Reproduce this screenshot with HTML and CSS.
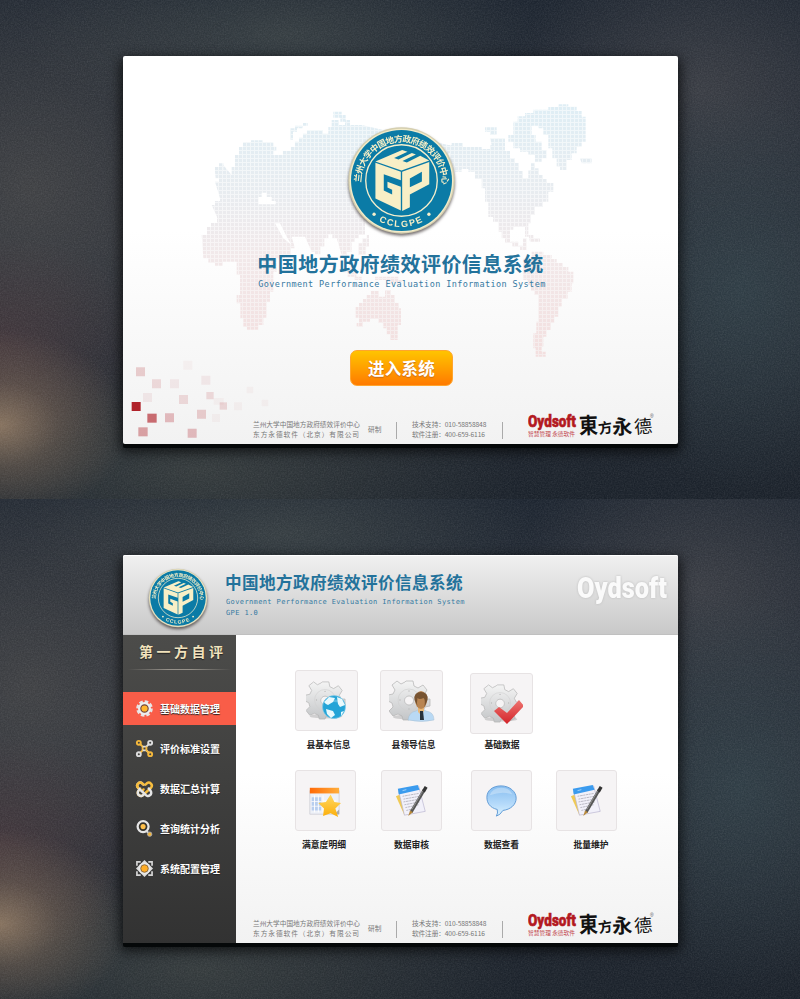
FILE: index.html
```html
<!DOCTYPE html>
<html lang="zh-CN">
<head>
<meta charset="utf-8">
<title>中国地方政府绩效评价信息系统</title>
<link rel="stylesheet" href="styles.css">
</head>
<body>
<svg class="defs" width="0" height="0" aria-hidden="true">
  <defs>
    <filter id="grain" x="0" y="0" width="100%" height="100%"><feTurbulence type="fractalNoise" baseFrequency=".7" numOctaves="2" seed="4"/><feColorMatrix values="0 0 0 0 1  0 0 0 0 1  0 0 0 0 1  .9 .9 0 0 -.65"/></filter>
    <path id="arcTop" d="M-121 6A121 121 0 0 1 121 6"/>
    <path id="arcBottom" d="M-139 0A139 139 0 0 0 139 0"/>
    <linearGradient id="silver" x1="0" y1="0" x2="0" y2="1"><stop offset="0" stop-color="#f4f4f4"/><stop offset="1" stop-color="#c3c5c7"/></linearGradient>
    <linearGradient id="blueBall" x1="0" y1="0" x2="0" y2="1"><stop offset="0" stop-color="#86bdf0"/><stop offset=".6" stop-color="#b5dafa"/><stop offset="1" stop-color="#dcf3ff"/></linearGradient>
    <linearGradient id="redTick" x1="0" y1="0" x2="0" y2="1"><stop offset="0" stop-color="#ee7470"/><stop offset="1" stop-color="#d3242a"/></linearGradient>
    <linearGradient id="starFill" x1="0" y1="0" x2="0" y2="1"><stop offset="0" stop-color="#ffd964"/><stop offset="1" stop-color="#fcae0a"/></linearGradient>
    <linearGradient id="calHead"><stop offset="0" stop-color="#ff6a08"/><stop offset="1" stop-color="#ffae3c"/></linearGradient>
    <symbol id="emblem" viewBox="-163 -163 326 326">
      <circle r="159" fill="#d5cfaf"/><circle r="155" fill="#f3ecca"/><circle r="151" fill="#0b7ba6"/>
      <circle r="107" fill="none" stroke="#f6efcc" stroke-width="4"/>
      <text class="ring-cn" textLength="386"><textPath href="#arcTop">兰州大学中国地方政府绩效评价中心</textPath></text>
      <text class="ring-en" text-anchor="middle"><textPath href="#arcBottom" startOffset="50%">CCLGPE</textPath></text>
      <circle cx="-82" cy="101" r="5" fill="#f6efcc"/><circle cx="82" cy="101" r="5" fill="#f6efcc"/>
      <g fill="#f8efc6">
        <path d="M-78-53L-2-26V-1L-53-19V30L-28 42V28L-42 21V4L-2 19V90L-78 54Z"/>
        <path fill-rule="evenodd" d="M2-26L83-55V11L25 42V80L2 91ZM25-6V20L61 3V-26Z"/>
        <path d="M-78-57L2-91 18-86-22-67-9-63 31-82 43-78 3-58 16-54 56-74 83-60 0-30Z"/>
      </g>
    </symbol>
    <symbol id="gear" viewBox="0 0 42 42">
      <ellipse cx="21" cy="38" rx="17" ry="2.5" fill="#bbb" opacity=".65"/>
      <path fill-rule="evenodd" d="M17 2h7l1 5 4 2 5-3 4 5-3 5 2 4h4v7l-5 1-2 4 2 5-6 3-4-3-5 1-1 3h-6l-1-4-4-2-5 2-4-5 4-4-1-4-4-2v-6l5-1 2-4-3-5 5-4 4 3 4-2zM20 17a4.500 4.500 0 1 0 .1 0z" fill="url(#silver)" stroke="#b2b2b2" stroke-width=".7"/>
      <circle cx="20" cy="21" r="11" fill="none" stroke="#cfcfcf" stroke-width=".6"/>
      <g fill="#bbb"><circle cx="20" cy="12" r=".7"/><circle cx="11" cy="21" r=".7"/><circle cx="29" cy="21" r=".7"/><circle cx="20" cy="30" r=".7"/></g>
    </symbol>
    <symbol id="document" viewBox="0 0 36 36">
      <path d="M1 13L13 8 19 29 10 33Z" fill="#f0ca55"/>
      <path d="M4 8L25 2 32 29 10 33Z" fill="#f2f1fa" stroke="#b8b3cf" stroke-width=".7"/>
      <path d="M3 5L24 1 26 6 4 11Z" fill="#3b9bee"/>
      <path d="M8 7l4-1" stroke="#a5d3fa"/>
      <path d="M8 13l17-3M9 16l17-3M9 19l17-3M10 22l16-3M11 25l14-3M12 28l9-2" stroke="#aaa9b4" stroke-width=".8" stroke-dasharray="2 .6 3 .5"/>
      <path d="M31 6L17 30" stroke="#555" stroke-width="3.2"/><path d="M33 3L30 8" stroke="#333" stroke-width="3.5"/>
      <path d="M29.500 7L18 27" stroke="#aaa" stroke-width=".7"/><path d="M16 28l3 2-5 4z" fill="#b88a3c"/>
    </symbol>
    <symbol id="brand" viewBox="0 0 126 28">
      <text class="oyd" x="0" y="15.500" textLength="48" lengthAdjust="spacingAndGlyphs">Oydsoft</text>
      <text class="slogan" x="0" y="24.500" textLength="47" lengthAdjust="spacingAndGlyphs">智慧管理 永德软件</text>
      <g class="brush">
        <text x="51" y="22.500" font-size="22" textLength="19" lengthAdjust="spacingAndGlyphs" transform="rotate(-2 60 14)">東</text>
        <text x="70" y="22" font-size="14" transform="rotate(-8 77 16)">方</text>
        <text x="84" y="23" font-size="20" transform="rotate(-3 94 15)">永</text>
        <text class="thin" x="106" y="22" font-size="18" transform="rotate(-5 115 15)">德</text>
      </g>
      <text class="reg" x="122" y="7">®</text>
    </symbol>
  </defs>
</svg>

<section class="scene">
  <svg class="grain"><rect width="800" height="500" filter="url(#grain)"/></svg>
  <div class="window splash">
    <svg class="backdrop" viewBox="123 56 555 388" aria-hidden="true">
      <defs>
        <pattern id="cells" width="12" height="12" patternUnits="userSpaceOnUse"><rect width="12" height="12" fill="#777"/><rect width="9" height="9" fill="#fff"/></pattern>
        <mask id="grid" maskUnits="userSpaceOnUse" x="0" y="0" width="1210" height="810"><rect width="1210" height="810" fill="url(#cells)"/></mask>
        <linearGradient id="mapTint" gradientUnits="userSpaceOnUse" x1="0" y1="30" x2="0" y2="780"><stop offset="0" stop-color="#dfeef5"/><stop offset=".35" stop-color="#e8ecf0"/><stop offset=".6" stop-color="#f2e9ea"/><stop offset="1" stop-color="#f3dfdf"/></linearGradient>
      </defs>
      <g transform="translate(195 95) scale(.33333)" fill="url(#mapTint)" mask="url(#grid)">
        <path fill-rule="evenodd" d="M20 420H36V396H48V384H66V365L50 330H60V318H75V310L60 260H72V228H85V210L110 240V216H120V180H132V156H144V142H168V136H204V142H235V155H244V168H235V180H264V168H288V156H300V140H312V128H324V116H336V106H384V116H400V96H410V75H432V90H500L760 150V230L540 300 510 380V420H492V430H480V440H470V470H456V480H440L425 430H412V418H400V430H388V455H376V478H360V470H350L330 425H290L300 460H288V480H270V490H245V530H235V590H225V620H215V668H205V690H190V704H156V696H145V670H136V625H125V600H135V540H125V500H84V512H60V504H40V490H25ZM190 320V306H200V293H215V306H230V318H242V328H190ZM240 385L265 430 290 450 275 425 255 385Z"/>
        <path d="M285 134V100H300V92H324V84H338V92H324V100H306V110H294V134ZM415 50H440V60H452V75H465V90H450V80H436V68H415ZM60 230V216H72V205H85V240H72V250H62ZM490 480V445H502V430H515V420H522V455H512V480ZM440 520H470V532H484V545H500V555H478V545H458V532H440ZM540 545H610V555H620V565H580V555H540Z"/>
        <path d="M482 650V636H492V624H504V612H515V600H528V588H552V605H570V585H588V600H600V624H612V640H618V690H608V735H585V718H575V700H565V684H550V672H525V680H504V695H485V684H492V668H482Z"/>
        <path d="M755 150H770V144H804V156H860V162H885V150H930V168H945V190H960V204H972V228H984V250H1000V225H1008V205H1020V220H1032V240H1044V252H1056V264H1075V290H1060V320H1044V336H1020V360H1008V385H1000V425H990V396H955V404H945V440H970V452H984V430H995V465H975V455H952V444H930V430H920V410H910V380H894V366H880V320H870V280H860V252H840V230H820V222H800V230H780V240H768V220H756V190H765V175H755Z"/>
        <path d="M955 80H968V64H990V54H1015V44H1060V36H1090V28H1120V35H1145V48H1160V65H1172V140H1160V155H1145V175H1130V195H1115V225H1095V215H1085V190H1072V160H1060V120H1045V100H1030V92H1010V120H1022V140H1040V165H1055V190H1040V200H1020V180H1000V170H975V160H955V140H940V120H955ZM870 97H905V120H885V110H870ZM885 130H930V150H890ZM1155 190H1190V205H1160ZM1000 420H1015V430H1035V440H1005Z"/>
        <path d="M1010 470H1045V480H1070V492H1085V504H1104V516H1120V530H1135V565H1130V590H1118V612H1100V635H1090V665H1078V684H1068V705H1055V725H1045V755H1040V770H1052V785H1022V760H1015V715H1024V680H1030V600H1018V588H1008V570H998V555H985V490H1010Z"/>
      </g>
      <g transform="translate(120 340) scale(.33333)" fill="#b0222a">
        <path opacity=".2" d="M48 82h27v27h-27zM231 209h27v27h-27z"/><path opacity=".14" d="M96 118h27v27h-27zM177 165h27v27h-27zM259 156h22v22h-22z"/>
        <path opacity=".07" d="M150 118h27v27h-27zM69 159h27v27h-27zM244 107h27v27h-27z"/><path opacity=".035" d="M190 62h27v27h-27zM276 222h24v24h-24zM342 187h24v24h-24zM281 174h30v20h-30zM380 140h20v20h-20zM425 179h20v20h-20z"/>
        <path opacity=".15" d="M299 187h22v22h-22z"/><path opacity=".28" d="M135 220h27v27h-27zM203 266h27v27h-27z"/><path opacity=".4" d="M55 262h28v27h-28z"/><path opacity=".65" d="M82 221h28v27h-28z"/><path d="M35 186h27v27h-27z"/>
      </g>
    </svg>
    <svg class="emblem big"><use href="#emblem"/></svg>
    <h1>中国地方政府绩效评价信息系统</h1>
    <p class="en">Government Performance Evaluation Information System</p>
    <button>进入系统</button>
    <footer>
      <div class="makers"><span>兰州大学中国地方政府绩效评价中心</span><span class="wide">东方永德软件（北京）有限公司</span></div>
      <span class="by">研制</span><i></i>
      <div class="contact"><span>技术支持：010-58858848</span><span>软件注册：400-659-6116</span></div><i></i>
      <svg class="brand"><use href="#brand"/></svg>
    </footer>
  </div>
</section>

<section class="scene">
  <svg class="grain"><rect width="800" height="500" filter="url(#grain)"/></svg>
  <div class="window app">
    <header>
      <svg class="emblem small"><use href="#emblem"/></svg>
      <div class="heading"><h2>中国地方政府绩效评价信息系统</h2><p class="en">Government Performance Evaluation Information System</p><p class="en">GPE 1.0</p></div>
      <svg class="wordmark" viewBox="0 0 94 32"><text x="2" y="24.500" textLength="90" lengthAdjust="spacingAndGlyphs">Oydsoft</text></svg>
    </header>
    <div class="body">
      <nav>
        <h3>第一方自评</h3>
        <a class="active"><svg viewBox="0 0 18 18"><circle cx="9" cy="9" r="7.500" fill="none" stroke="#e5e5e5" stroke-width="2.600" stroke-dasharray="3.800 2.090"/><circle cx="9" cy="9" r="5.700" fill="#70443b" stroke="#eee" stroke-width="2.400"/><circle cx="9" cy="9" r="3.300" fill="#ffb62e"/></svg>基础数据管理</a>
        <a><svg viewBox="0 0 18 18" fill="none" stroke-width="2"><path d="M4 4l3 3v4l-3 3" stroke="#f4b83c"/><path d="M14 4l-3 3H7M14 14l-3-3H7" stroke="#ddd"/><path d="M11 7v4l3 3" stroke="#f4b83c"/><circle cx="3" cy="3" r="2.100" stroke="#f4b83c"/><circle cx="15" cy="3" r="2.100" stroke="#ddd"/><circle cx="3" cy="15" r="2.100" stroke="#ddd"/><circle cx="15" cy="15" r="2.100" stroke="#f4b83c"/></svg>评价标准设置</a>
        <a><svg viewBox="0 0 18 18" fill="none" stroke-width="2.600" stroke-linecap="round"><path d="M8 10L6.500 11.500M10 5L11.500 3.500a3.200 3.200 0 0 1 4.500 4.500L8 15.500a3.200 3.200 0 0 1-5.500-4l2-2.500" stroke="#f7bd3e"/><path d="M8 5L6.500 3.500A3.200 3.200 0 0 0 2 8l8 7.500a3.200 3.200 0 0 0 5.500-4l-2-2.500" stroke="#e5e5e5"/><path d="M2 8A3.200 3.200 0 0 1 6.500 3.500L8 5" stroke="#f7bd3e"/><path d="M8 15.500a3.200 3.200 0 0 1-5.500-4" stroke="#e5e5e5"/></svg>数据汇总计算</a>
        <a><svg viewBox="0 0 18 18"><circle cx="7.500" cy="7" r="5.800" fill="#35332d" stroke="#e6e6e6" stroke-width="2.400"/><circle cx="7.500" cy="7" r="2.700" fill="#ffc04a"/><path d="M11 12l3 2" stroke="#ddd" stroke-width="2"/><circle cx="14.500" cy="15" r="2.300" fill="#f3b438" stroke="#aaa"/></svg>查询统计分析</a>
        <a><svg viewBox="0 0 18 18"><path d="M1 6V2h4M13 2h4v4M17 12v4h-4M5 16H1v-4" fill="none" stroke="#d5d5d5" stroke-width="1.800"/><path d="M9 0l9 9-9 9-9-9z" fill="#dcdcdc"/><circle cx="9" cy="9" r="6.300" fill="#e8e8e8"/><circle cx="9" cy="9" r="4" fill="#ffad26" stroke="#8a673b"/></svg>系统配置管理</a>
      </nav>
      <main>
        <div class="tiles first">
          <figure><div><svg viewBox="0 0 42 44"><use href="#gear" width="40" height="42"/><circle cx="28" cy="28" r="11.500" fill="#24a4d7" stroke="#8acce8" stroke-width=".6"/><path d="M18 23l5-5 6 1-2 4-5 3-2-1zM31 18l5 2 3 6-5 2-2-3zM20 30l7 2 2 4-4 3-4-4zM35 33l3-1-3 5z" fill="#e8f9fd"/><path d="M19 25a10 8 0 0 1 18 0q-9-4-18 0" fill="#fff" opacity=".25"/></svg></div><figcaption>县基本信息</figcaption></figure>
          <figure><div><svg class="person" viewBox="0 0 46 44"><use href="#gear" width="42" height="42"/><path d="M19 41q1-8 8-9l5-3 5 3q8 1 8 9-12 3-26 0" fill="#b9d9f4" stroke="#a7bed2" stroke-width=".5"/><path d="M29 25h6v7l-3 4-3-3z" fill="#e9b878"/><path d="M31 32h3l1 9h-4z" fill="#27323b"/><ellipse cx="32" cy="21" rx="6" ry="9" fill="#b98552"/><path d="M25.500 21q-1-8 6.500-8t6.500 8l-3 7q1-8-1-9-4 2-6 0-1 5 0 8z" fill="#775331"/></svg></div><figcaption>县领导信息</figcaption></figure>
          <figure class="low"><div><svg viewBox="0 0 42 44"><use href="#gear" width="40" height="42"/><path d="M13 29l5-4 8 6 12-13 5 6-17 18z" fill="url(#redTick)"/></svg></div><figcaption>基础数据</figcaption></figure>
        </div>
        <div class="tiles second">
          <figure><div><svg class="calendar" viewBox="0 0 36 36"><path d="M3 7h31v25H3z" fill="#eef1f8" stroke="#d2d2da"/><path d="M3 4h31v6H3z" fill="url(#calHead)"/><path d="M5 14h10v4H5zm0 5h10v4H5zm0 5h10v4H5z" fill="#b8ceef"/><path d="M8 12v18M12 12v18M17 12v18M17 18h14" stroke="#fff"/><path d="M29 32l5-5v5z" fill="#aaa"/><path d="M25 11l4 8 7 1-6 6 3 9-8-4-8 3 1-8-6-6 8-1z" fill="url(#starFill)"/></svg></div><figcaption>满意度明细</figcaption></figure>
          <figure><div><svg viewBox="0 0 36 36"><use href="#document"/></svg></div><figcaption>数据审核</figcaption></figure>
          <figure><div><svg viewBox="0 0 36 36"><path d="M17 2c9 0 16 6 16 13s-6 12-14 13q-3 5-7 6 2-3 1-7C5 25 2 20 2 14 2 7 8 2 17 2z" fill="url(#blueBall)" stroke="#5f99d5"/><path d="M5 12Q8 4 17 4t12 7q-11-4-24 1" fill="#fff" opacity=".3"/></svg></div><figcaption>数据查看</figcaption></figure>
          <figure><div><svg viewBox="0 0 36 36"><use href="#document"/></svg></div><figcaption>批量维护</figcaption></figure>
        </div>
        <footer>
          <div class="makers"><span>兰州大学中国地方政府绩效评价中心</span><span class="wide">东方永德软件（北京）有限公司</span></div>
          <span class="by">研制</span><i></i>
          <div class="contact"><span>技术支持：010-58858848</span><span>软件注册：400-659-6116</span></div><i></i>
          <svg class="brand"><use href="#brand"/></svg>
        </footer>
      </main>
    </div>
  </div>
</section>
</body>
</html>
```
FILE: styles.css
```css
* { box-sizing: border-box; margin: 0; padding: 0; }
body { width: 800px; font-family: "Liberation Sans", "Noto Sans CJK SC", sans-serif; background: #1c222b; }
.defs { position: absolute; }
svg { display: block; flex: none; }

.scene {
  position: relative; height: 499px; padding: 56px 0 0 123px; overflow: hidden;
  background:
    radial-gradient(ellipse 130px 95px at 0 425px, rgba(150,126,102,.85), rgba(128,106,88,.45) 45%, rgba(100,85,75,0)),
    radial-gradient(ellipse 150px 110px at 0 345px, rgba(84,58,62,.5), rgba(84,58,62,0)),
    radial-gradient(ellipse 260px 260px at 30px 190px, rgba(72,72,73,.75), rgba(72,72,73,0)),
    radial-gradient(ellipse 320px 120px at 200px 470px, rgba(66,72,70,.65), rgba(66,72,70,0)),
    radial-gradient(ellipse 260px 90px at 280px 35px, rgba(62,70,72,.75), rgba(62,70,72,0)),
    radial-gradient(ellipse 170px 200px at 740px 290px, rgba(50,66,74,.8), rgba(50,66,74,0)),
    radial-gradient(ellipse 190px 150px at 700px 90px, rgba(66,68,74,.75), rgba(66,68,74,0)),
    linear-gradient(#1e2631, #292e37 50%, #1b222b);
}
.scene + .scene { height: 500px; }
.grain { position: absolute; left: 0; top: 0; width: 800px; height: 500px; opacity: .1; }
.window { position: relative; width: 555px; height: 388px; border-radius: 2px; box-shadow: 0 4px 0 #050809, 0 5px 12px 3px rgba(0,0,0,.65); }

.splash { display: flex; flex-direction: column; align-items: center; padding-top: 70px; background: linear-gradient(#fff 45%, #f2f2f2); }
.backdrop { position: absolute; left: 0; top: 0; width: 555px; height: 388px; }
.splash > :not(.backdrop) { position: relative; }
.emblem { overflow: visible; filter: drop-shadow(0 2px 1.5px rgba(40,30,30,.65)); }
.big { width: 109px; height: 109px; margin-left: 1px; }
.small { width: 60px; height: 60px; }
.ring-cn { font: bold 26px "Noto Sans CJK SC", sans-serif; fill: #f8efc6; }
.ring-en { font: bold 27px "Liberation Sans", sans-serif; letter-spacing: 5px; fill: #f8efc6; }
h1, h2 { font-family: "Noto Sans CJK SC", sans-serif; color: #23729b; white-space: nowrap; }
h1 { margin-top: 16px; font-size: 20px; line-height: 26px; letter-spacing: .45px; }
.en { font-family: "DejaVu Sans Mono", monospace; color: #3579a1; white-space: nowrap; }
.splash .en { margin: 0 0 0 3px; font-size: 8.5px; line-height: 14px; letter-spacing: .41px; }
button { width: 103px; height: 36px; margin: 59px 0 0 2px; border: 1px solid #ffa52d; border-radius: 7px; background: linear-gradient(#ffc400, #ffa000 50%, #ff7a00); color: #fff; font: bold 16.5px/32px "Noto Sans CJK SC", sans-serif; letter-spacing: .3px; text-shadow: 0 1px 1px #c86b1a; }

footer { display: flex; align-items: center; height: 34px; padding-top: 6px; color: #777; font: 6.7px/9.7px "Noto Sans CJK SC", sans-serif; white-space: nowrap; }
.splash footer { width: 425px; margin: 24px 0 0 130px; }
footer span { display: block; }
.makers { width: 115px; }
.wide { letter-spacing: .95px; }
.by { width: 28px; }
footer i { width: 1px; height: 17px; margin-right: 15px; background: #aaa; }
.contact { width: 90px; }
.contact span { letter-spacing: -.14px; }
.brand { align-self: flex-start; width: 126px; height: 28px; margin: -5px 0 0 10px; overflow: visible; }
.oyd { font: 900 17px Roboto, sans-serif; fill: #b31921; stroke: #b31921; stroke-width: .6; }
.slogan { font: 6px "Noto Sans CJK SC", sans-serif; fill: #c2434a; }
.brush { font-family: "Noto Sans CJK SC", sans-serif; font-weight: 700; fill: #111; }
.thin { font-weight: 400; }
.reg { font: 5px "Liberation Sans", sans-serif; fill: #555; }

.app { background: #fff; }
header { display: flex; align-items: flex-start; height: 80px; padding: 12px 9px 0 25px; border-top: 1px solid #fff; border-bottom: 1px solid #c0c0c0; border-radius: 2px 2px 0 0; background: linear-gradient(#f0f0f0, #c9c9c9); }
.heading { width: 260px; margin: 3px 0 0 17px; }
h2 { font-size: 16.6px; line-height: 22px; letter-spacing: .4px; }
.heading .en { margin-left: 1px; font-size: 7px; line-height: 10.5px; letter-spacing: .38px; }
.heading h2 + .en { margin-top: 4px; }
.wordmark { width: 94px; height: 32px; margin: 5px 0 0 auto; overflow: visible; filter: drop-shadow(0 0 1px #bbb); }
.wordmark text { font: 900 29px Roboto, sans-serif; fill: #fafafa; }
.body { display: flex; height: 308px; }
nav { width: 113px; background: linear-gradient(#4c4c4a, #323232); color: #fff; font: bold 10px/33px "Noto Sans CJK SC", sans-serif; }
h3 { height: 35px; margin-bottom: 22px; padding-left: 16px; font-size: 14px; line-height: 32px; letter-spacing: 3.5px; color: #f1e2bd; text-shadow: 0 1px 1px #222; background: linear-gradient(90deg, transparent 4%, #96918a 40%, #96918a 60%, transparent 96%) 0 100% / 100% 1px no-repeat; }
nav a { display: flex; align-items: center; height: 33px; margin-bottom: 7px; padding-left: 13px; text-shadow: 0 1px 1px #222; }
nav a svg { width: 17px; height: 17px; margin-right: 7px; overflow: visible; }
nav .active { background: #f95d48; }
main { width: 442px; background: linear-gradient(#fff 45%, #f2f2f2); }
.tiles { display: grid; grid-template-columns: 85px 90px 86px 62px; padding-left: 59px; }
.first { height: 99px; padding-top: 35px; }
.second { grid-template-columns: 86px 90px 85px 62px; height: 146px; padding-top: 36px; }
figure { width: 62px; }
figure div { display: flex; align-items: center; justify-content: center; height: 61px; border: 1px solid #e7e3e4; border-radius: 3px; background: #f6f4f5; }
.first figure div { width: 63px; }
figure div svg { width: 42px; height: 44px; }
figure .person { width: 46px; }
.second figure div svg { width: 34px; height: 34px; }
.second figure .calendar { margin-right: 4px; }
.second figure div { width: 61px; }
figcaption { width: 67px; color: #222; font: bold 8.8px/13px "Noto Sans CJK SC", sans-serif; text-align: center; margin-top: 7px; white-space: nowrap; }
.low { padding-top: 3px; }
.low figcaption { width: 64px; margin-top: 4px; }
.second figcaption { width: 61px; margin-top: 7px; }
.second figure:first-child figcaption { width: 58px; }
.second figure:last-child figcaption { width: 70px; }
main footer { margin-left: 17px; margin-top: 29px; }
```
